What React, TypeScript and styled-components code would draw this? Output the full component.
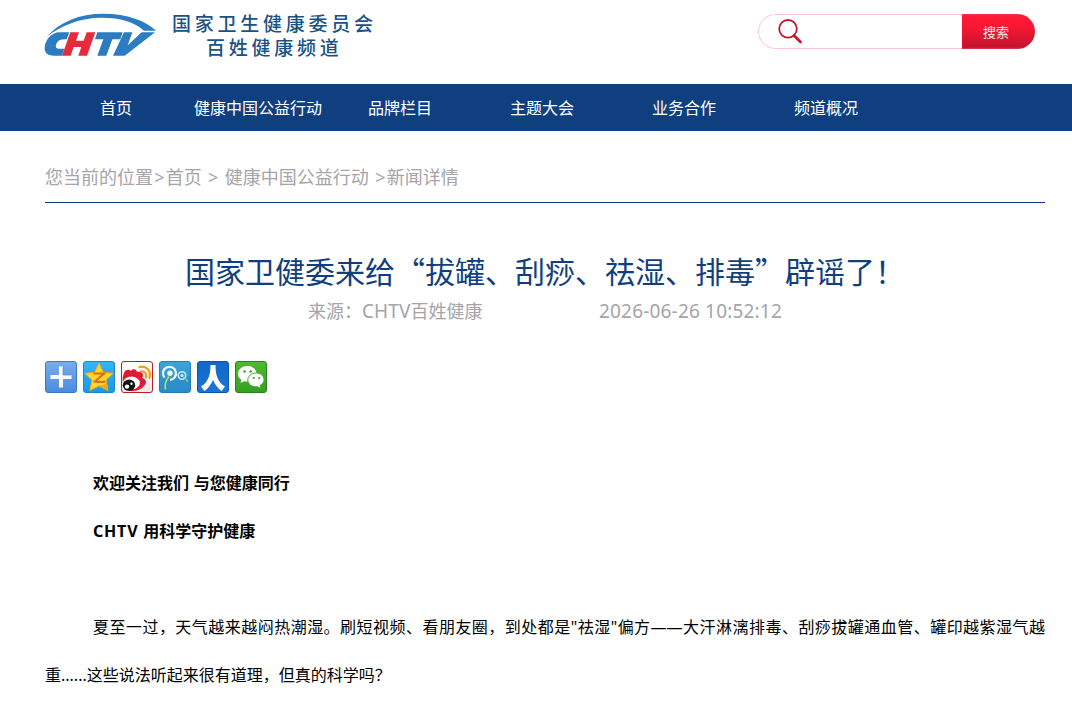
import React from "react";
import styled, { createGlobalStyle } from "styled-components";

const GlobalStyle = createGlobalStyle`
  * { box-sizing: border-box; }
  body {
    margin: 0;
    background: #fff;
    font-family: "Noto Sans", "Noto Sans CJK SC", sans-serif;
    font-size: 16px;
    color: #000;
  }
  #root { height: 706px; overflow: hidden; }
`;

const Header = styled.header`
  display: flex;
  align-items: flex-start;
  height: 84px;
  padding: 0 37px 0 40px;
`;
const Logo = styled.svg`
  width: 122px;
  height: 60px;
  margin-top: 5px;
  flex: none;
`;
const OrgName = styled.div`
  width: 206px;
  margin: 11px 0 0 10px;
  color: #1c5283;
  font: 500 19px/24px "Noto Sans CJK SC", sans-serif;
  letter-spacing: 3.75px;
  white-space: nowrap;
`;
const OrgLine = styled.div<{ $indent?: number }>`
  padding-left: ${(p) => p.$indent ?? 0}px;
`;
const Search = styled.form`
  display: flex;
  width: 277px;
  height: 35px;
  margin: 14px 0 0 auto;
  border-radius: 18px;
  overflow: hidden;
`;
const SearchField = styled.div`
  flex: 1;
  border: 1px solid #ffc5cc;
  border-right: 0;
  border-radius: 18px 0 0 18px;
  padding: 3px 0 0 19px;
`;
const SearchButton = styled.button`
  width: 73px;
  border: 0;
  padding: 0 5px 1px 0;
  color: #ffe9eb;
  background: linear-gradient(#f8364f 0, #ff1935 2px, #fa1733 35%, #c4142e 95%, #d5405a);
  font: 13px "Noto Sans CJK SC", sans-serif;
`;

const Nav = styled.nav`
  display: flex;
  height: 47px;
  padding-left: 45px;
  background: #103f80;
`;
const NavItem = styled.a`
  width: 142px;
  text-align: center;
  line-height: 48px;
  color: #fff;
  white-space: nowrap;
`;

const Main = styled.main`
  width: 1000px;
  margin-left: 45px;
`;
const Breadcrumb = styled.div`
  height: 72px;
  padding-top: 32px;
  border-bottom: 1px solid #103f80;
  color: #a4a4a9;
  font-size: 18px;
  line-height: 28px;
  word-spacing: 0.55px;
  white-space: pre;
`;
const Arrow = styled.span`
  margin: 0 1.2px;
`;
const Title = styled.h1`
  margin: 47px 0 0;
  text-align: center;
  color: #103f80;
  font: 400 30px/40px "Noto Sans CJK SC", sans-serif;
  white-space: nowrap;
`;
const Meta = styled.div`
  display: flex;
  margin-top: 2px;
  padding-left: 263px;
  color: #a4a4a9;
  font-size: 18px;
  line-height: 39px;
  height: 39px;
`;
const Source = styled.span`
  width: 291px;
`;
const Latin = styled.span<{ $gap: number; $size?: number }>`
  font-size: ${(p) => p.$size ?? 19}px;
  letter-spacing: ${(p) => p.$gap}px;
`;
const Share = styled.div`
  display: flex;
  gap: 6px;
  margin-top: 30px;
`;
const ShareIcon = styled.svg`
  width: 32px;
  height: 32px;
`;
const Article = styled.article`
  margin-top: 66px;
  line-height: 48px;
`;
const Paragraph = styled.p<{ $bold?: boolean }>`
  margin: 0;
  min-height: 48px;
  text-indent: 48px;
  text-align: justify;
  font-weight: ${(p) => (p.$bold ? 700 : 400)};
  word-spacing: ${(p) => (p.$bold ? 0.7 : 0)}px;
`;

const ChtvLogo = () => (
  <Logo viewBox="0 0 366 180">
    <g fill="#2b7cc0">
      <path d="M20 95C60 50 118 26 190 26C262 26 318 48 348 77L312 77C282 50 242 38 185 38C120 38 62 62 20 95Z" />
      <path d="M88 82H58C34 82 14 106 14 130C14 146 26 152 42 152H66L73 131H57C47 131 45 122 51 113C56 105 63 103 80 103Z" />
      <path d="M172 82H248L241 103H217L199 152H172L190 103H165Z" />
      <path d="M252 82H277L263 121L305 82H345L254 152H219Z" />
    </g>
    <path fill="#e72a3c" d="M91 82H117L108 107H131L140 82H166L141 152H115L124 126H101L92 152H66Z" />
  </Logo>
);

const Tile = ({ id, from, to, edge, children }: {
  id: string; from: string; to: string; edge: string; children: React.ReactNode;
}) => (
  <ShareIcon viewBox="0 0 32 32">
    <defs>
      <linearGradient id={id} x2="0" y2="1">
        <stop stopColor={from} />
        <stop offset="1" stopColor={to} />
      </linearGradient>
    </defs>
    <rect x=".5" y=".5" width="31" height="31" rx="2.5" fill={`url(#${id})`} stroke={edge} />
    {children}
  </ShareIcon>
);

const navItems = ["首页", "健康中国公益行动", "品牌栏目", "主题大会", "业务合作", "频道概况"];

export default function App() {
  return (
    <div lang="zh-CN">
      <GlobalStyle />
      <Header>
        <ChtvLogo />
        <OrgName>
          <OrgLine>国家卫生健康委员会</OrgLine>
          <OrgLine $indent={34}>百姓健康频道</OrgLine>
        </OrgName>
        <Search>
          <SearchField>
            <svg width="27" height="27" viewBox="0 0 27 27" fill="none" stroke="#c4142e">
              <circle cx="10" cy="10.8" r="8.8" strokeWidth="1.8" />
              <path d="M16 17.500l6.500 6.500" strokeWidth="2.600" strokeLinecap="round" />
            </svg>
          </SearchField>
          <SearchButton type="button">搜索</SearchButton>
        </Search>
      </Header>
      <Nav>
        {navItems.map((item) => <NavItem key={item}>{item}</NavItem>)}
      </Nav>
      <Main>
        <Breadcrumb>
          您当前的位置<Arrow>&gt;</Arrow>首页 <Arrow>&gt;</Arrow> 健康中国公益行动 <Arrow>&gt;</Arrow>新闻详情
        </Breadcrumb>
        <Title>国家卫健委来给“拔罐、刮痧、祛湿、排毒”辟谣了！</Title>
        <Meta>
          <Source>来源：<Latin $gap={0.1}>CHTV</Latin>百姓健康</Source>
          <Latin $gap={0.18}>2026-06-26 10:52:12</Latin>
        </Meta>
        <Share>
          <Tile id="more" from="#79adeb" to="#4a8be0" edge="#3b78c6">
            <path d="M16 5.500v21M5.500 16h21" stroke="#fff" strokeWidth="4" />
            <path d="M18 6v8h8" stroke="#4a87d8" fill="none" strokeWidth=".7" />
          </Tile>
          <Tile id="qzone" from="#38b4f3" to="#149be8" edge="#1487d0">
            <path d="M16 2l4.300 9.300 10 1-7.300 6.700 2.100 10.500L16 25l-9.100 4.500L9 19l-7.300-6.700 10-1z" fill="#ffd52e" stroke="#f0a81c" strokeLinejoin="round" />
            <path d="M10.500 12.500h10.500l-9 8q5 1 10.500 0" fill="none" stroke="#d8701a" strokeWidth="2.200" />
            <path d="M23.500 22l1.300 7L16 24.500q5 0 7.500-2.500" fill="#f9a51a" />
          </Tile>
          <Tile id="weibo" from="#ffffff" to="#e9e9e9" edge="#bd1d20">
            <path d="M2 22C1 18 2 13 4 10c2-1 4-2 6 0 1-3 6-2 6 1 3-1 6 0 6 3 0 1 0 2-1 3 5 1 5 6 2 8-3 4-8 5-12 5C6 30 2 27 2 22z" fill="#e01a33" />
            <ellipse cx="10.500" cy="22" rx="8.500" ry="6.500" fill="#fff" />
            <ellipse cx="8" cy="24.200" rx="6.200" ry="5.600" fill="#111" />
            <circle cx="6" cy="25.600" r="2.200" fill="#fff" />
            <circle cx="10.500" cy="22.800" r="1.200" fill="#fff" />
            <path d="M19.500 10.500c4-1 6.500 2 5.500 6M18.500 6c7-1.500 12 4 10 11" fill="none" stroke="#f69b20" strokeWidth="2.200" strokeLinecap="round" />
          </Tile>
          <Tile id="tqq" from="#3ca5d6" to="#2c8cc6" edge="#237eb5">
            <path d="M1 16h30v14H1z" fill="#278bc8" opacity=".5" />
            <path d="M6.500 28.500c-1-5 0-9 3.500-13" fill="none" stroke="#b7dc68" strokeWidth="1.700" />
            <path d="M5.500 16.500a6.500 6.500 0 1 1 5.500 2.300" fill="none" stroke="#f0faff" strokeWidth="2.200" />
            <circle cx="11" cy="12.300" r="2.700" fill="#f0faff" />
            <circle cx="23" cy="14.500" r="3.700" fill="none" stroke="#d3ecf7" strokeWidth="1.500" />
            <circle cx="23" cy="14.500" r="1.500" fill="#d3ecf7" />
            <path d="M24 16.500q4 1.500 4.500 4" fill="none" stroke="#a9d184" strokeWidth="1.300" />
          </Tile>
          <Tile id="renren" from="#1267c5" to="#1977d8" edge="#0c56a9">
            <path d="M13.500 4h5c0 10 2 17 9.500 21.500L24.500 30c-4-3-6.500-6.500-8.500-11-2 4.500-4.500 8-8.500 11L4 25.500C11.500 21 13.500 14 13.500 4z" fill="#fff" />
          </Tile>
          <Tile id="wechat" from="#52b936" to="#369f20" edge="#27831a">
            <path d="M12.500 5C7 5 3 8.500 3 13c0 2.500 1.500 4.700 3.500 6L5.500 22l3.600-1.800c5 1.300 12-1.200 12.500-7C21.600 8.500 17.500 5 12.500 5z" fill="#fff" />
            <path d="M21.500 12c-5 0-8.700 3.200-8.700 7s4 7.500 9.700 6.700l3.500 1.800-1-3c2.500-1.500 4-3.500 4-5.800 0-4-3.500-6.700-7.500-6.700z" fill="#fff" stroke="#46a92e" />
            <g fill="#429d2c">
              <circle cx="9.500" cy="10.500" r="1.300" /><circle cx="15.700" cy="10.500" r="1.300" />
              <circle cx="18.800" cy="17" r="1.100" /><circle cx="24.200" cy="17" r="1.100" />
            </g>
          </Tile>
        </Share>
        <Article>
          <Paragraph $bold>欢迎关注我们 与您健康同行</Paragraph>
          <Paragraph $bold><Latin $gap={0.8} $size={16}>CHTV</Latin> 用科学守护健康</Paragraph>
          <Paragraph />
          <Paragraph>
            夏至一过，天气越来越闷热潮湿。刷短视频、看朋友圈，到处都是"祛湿"偏方——大汗淋漓排毒、刮痧拔罐通血管、罐印越紫湿气越重......这些说法听起来很有道理，但真的科学吗？
          </Paragraph>
        </Article>
      </Main>
    </div>
  );
}
